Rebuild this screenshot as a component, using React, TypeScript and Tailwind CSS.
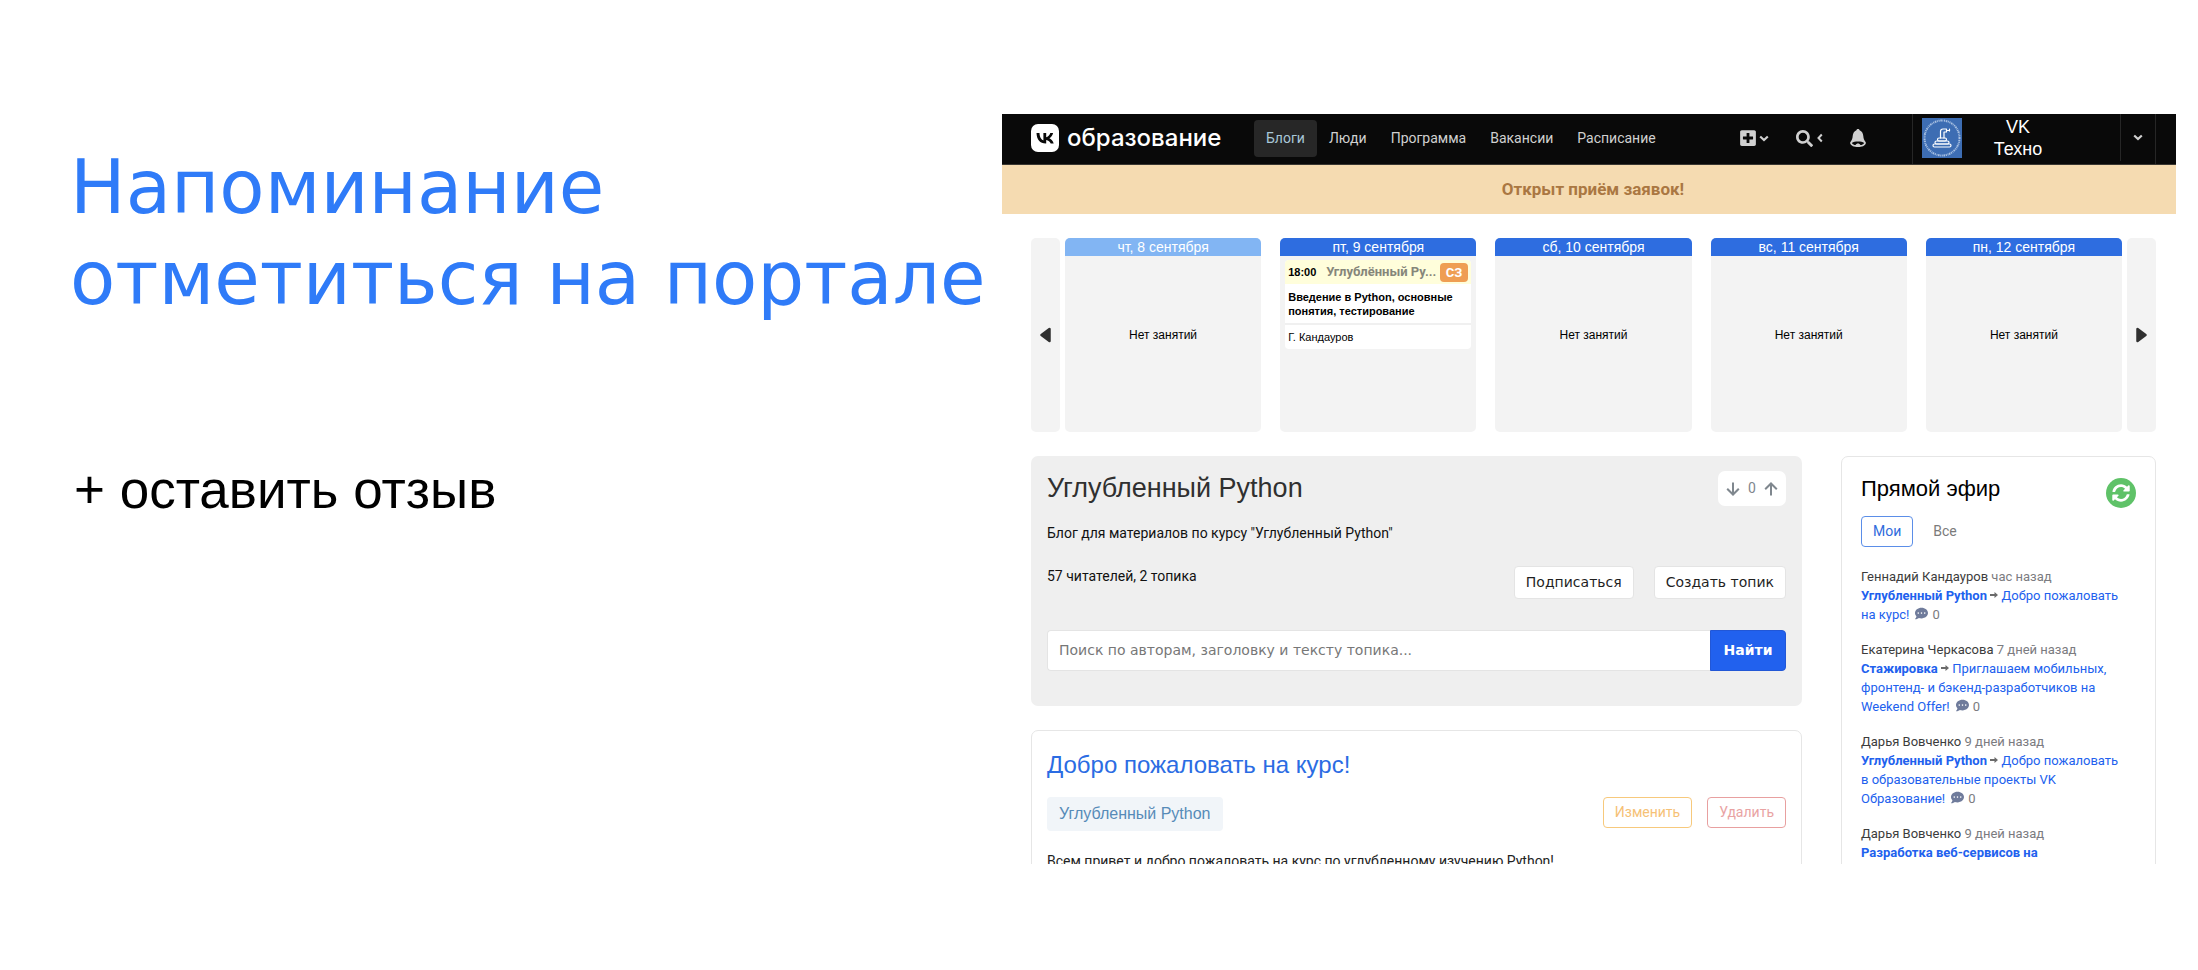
import type { ReactNode } from 'react';
import { FaCommentDots, FaPlusSquare, FaSearch, FaSyncAlt } from 'react-icons/fa';

const helvetica = "font-['Liberation_Sans',Arial,sans-serif]";
const verdana = "font-['DejaVu_Sans',Verdana,sans-serif]";

function VkLogo() {
  return (
    <svg viewBox="0 0 28 28" className="size-7" aria-hidden="true">
      <rect width="28" height="28" rx="7" fill="#fff" />
      <path
        d="M14.8 19.6C9 19.6 5.7 15.7 5.5 9.1h3c.1 4.8 2.2 6.9 3.9 7.3V9.1h2.8v4.2c1.700-.2 3.500-2.100 4.100-4.200h2.800c-.5 2.500-2.300 4.400-3.700 5.200 1.400.6 3.500 2.300 4.300 5.300h-3c-.700-2-2.300-3.500-4.500-3.700v3.700z"
        fill="#090909"
      />
    </svg>
  );
}

function Chevron({ left = false }: { left?: boolean }) {
  return left ? (
    <svg viewBox="0 0 6 10" className="h-[10px] w-[6px]" aria-hidden="true">
      <path d="M4.800 1.500 1.500 5l3.300 3.500" fill="none" stroke="#d0d0d0" strokeWidth="2" />
    </svg>
  ) : (
    <svg viewBox="0 0 10 7" className="h-[7px] w-[10px]" aria-hidden="true">
      <path d="M1.200 1.500 5 5l3.800-3.500" fill="none" stroke="#d0d0d0" strokeWidth="2.200" />
    </svg>
  );
}

function Bell() {
  return (
    <svg viewBox="0 0 16 18" className="h-[18px] w-4" aria-hidden="true">
      <path
        d="M8 0c.8 0 1.400.5 1.600 1.200 2.400 1 3.500 3.200 3.700 5.800.2 2.700.8 4.200 2.100 5.700.5.6.6 1.100.4 1.700C15.100 16.600 11.900 18 8 18S.9 16.600.2 14.400c-.2-.6-.1-1.100.4-1.700C1.900 11.200 2.500 9.700 2.700 7c.2-2.600 1.300-4.800 3.700-5.800C6.600.5 7.200 0 8 0z"
        fill="#d0d0d0"
      />
      <path d="M1.900 13.900c1.300-.9 3.600-1.300 6.100-1.300s4.800.4 6.100 1.300c-.9 1.400-2.200 2-3.700 2.200-.5-1-1.300-1.500-2.400-1.500s-1.900.5-2.400 1.500c-1.500-.2-2.800-.8-3.700-2.200z" fill="#090909" />
    </svg>
  );
}

function Avatar() {
  return (
    <svg viewBox="0 0 40 40" className="size-10 shrink-0" role="img" aria-label="VK Техно">
      <rect width="40" height="40" fill="#3d6db3" />
      <circle cx="20" cy="20" r="17.500" fill="none" stroke="#a9c1e2" strokeWidth="2" strokeDasharray="1.100 .7 1.600 .6 .8 .8" />
      <g fill="none" stroke="#fff" strokeWidth="1.200" strokeLinejoin="round" strokeLinecap="round">
        <rect x="11" y="26" width="18" height="3" rx="1.500" />
        <rect x="13" y="23" width="14" height="3" rx="1.500" />
        <rect x="15.500" y="20" width="9" height="3" rx="1.500" />
        <path d="M18.500 20v-6.500c0-1.600 1-2.500 2.500-2.500h3.500v3H22v6M24.500 12.500h3M27.500 11.200v1.800" />
      </g>
    </svg>
  );
}

function Arrow({ up = false }: { up?: boolean }) {
  return (
    <svg viewBox="0 0 14 14" className="size-[14px]" fill="none" stroke="#7f878e" strokeWidth="2" aria-hidden="true">
      {up ? <path d="M7 13.500V1.500M1.200 7.200 7 1.500l5.800 5.700" /> : <path d="M7 .5v12M1.200 6.800 7 12.500l5.800-5.700" />}
    </svg>
  );
}

function Triangle({ right = false }: { right?: boolean }) {
  return (
    <svg viewBox="0 0 11 16" className="h-4 w-[11px]" aria-hidden="true">
      <path
        d={right ? 'M1.500 2v12L9.500 8z' : 'M9.500 2v12L1.500 8z'}
        fill="#303030"
        stroke="#303030"
        strokeWidth="2.500"
        strokeLinejoin="round"
      />
    </svg>
  );
}

function RightArrow() {
  return (
    <svg viewBox="0 0 8 6" className="inline-block h-[6px] w-2 align-[2px]" aria-hidden="true">
      <path d="M0 2h4.500V0L8 3 4.500 6V4H0z" fill="#6b6b6b" />
    </svg>
  );
}

const links = ['Блоги', 'Люди', 'Программа', 'Вакансии', 'Расписание'];

function NavBar() {
  return (
    <header className="flex h-[51px] items-stretch border-b border-[#3a3732] bg-[#090909] pr-5 pl-[29px]">
      <a href="#home" className="flex w-[223px] items-center gap-2 pb-[2px] font-[Inter,sans-serif] text-2xl font-medium text-white">
        <VkLogo />
        образование
      </a>
      <nav className="flex items-center pb-[2px] text-[14px]">
        {links.map((label, i) => (
          <a
            key={label}
            href="#nav"
            className={
              i === 0
                ? 'flex h-[37px] items-center rounded-[4px] bg-[#272727] px-3 text-[#a9c7d8]'
                : 'flex h-[37px] items-center px-3 text-[#d0d0d0]'
            }
          >
            {label}
          </a>
        ))}
      </nav>
      <div className="ml-auto flex items-center gap-[27px] pr-[46px] pb-[2px] text-[#d0d0d0]">
        <button type="button" aria-label="Создать" className="flex items-center gap-[2px]">
          <FaPlusSquare className="size-[18px]" />
          <Chevron />
        </button>
        <button type="button" aria-label="Поиск" className="flex items-center gap-1">
          <FaSearch className="size-[17px]" />
          <Chevron left />
        </button>
        <button type="button" aria-label="Уведомления">
          <Bell />
        </button>
      </div>
      <div className="flex w-[244px] items-stretch border-r border-l border-[#262626]">
        <div className="flex flex-1 items-center pb-[2px] pl-[9px]">
          <Avatar />
          <a href="#profile" className={`w-28 px-7 text-center text-[18px] leading-[22px] text-white ${helvetica}`}>
            VK Техно
          </a>
        </div>
        <button type="button" aria-label="Меню" className="mb-[3px] flex w-[35px] items-center justify-center border-l border-[#262626]">
          <Chevron />
        </button>
      </div>
    </header>
  );
}

function Day({ title, past = false, children }: { title: string; past?: boolean; children?: ReactNode }) {
  return (
    <section className="flex flex-col overflow-hidden rounded-[5px] bg-[#f3f3f3]">
      <h3 className={`h-[18px] text-center text-[14px] leading-[18px] text-white ${past ? 'bg-[#82b5f3]' : 'bg-[#2e6de0]'}`}>{title}</h3>
      {children ?? <p className="flex flex-1 items-center justify-center pb-[18px] text-xs text-black">Нет занятий</p>}
    </section>
  );
}

function Schedule() {
  return (
    <div className={`mt-6 flex h-[194px] gap-[5px] ${helvetica}`}>
      <button type="button" aria-label="Назад" className="flex w-[29px] items-center justify-center rounded-[5px] bg-[#f3f3f3]">
        <Triangle />
      </button>
      <div className="grid flex-1 grid-cols-5 gap-[19px]">
        <Day title="чт, 8 сентября" past />
        <Day title="пт, 9 сентября">
          <article className="m-[5px] mt-1 overflow-hidden rounded-[4px] bg-white text-[11px] text-black">
            <div className="flex h-6 items-center bg-[#fffedb] px-[3px]">
              <time className="w-7 font-bold">18:00</time>
              <span className="ml-[10px] flex-1 font-[Roboto,sans-serif] text-[13px] font-bold text-[#86867a]">Углублённый Ру...</span>
              <span className="rounded-[4px] bg-[#ef9e53] px-[6px] font-[Roboto,sans-serif] text-[13px] leading-[19px] font-bold text-white">СЗ</span>
            </div>
            <h4 className="px-[3px] pt-[6px] pb-[5px] leading-[14px] font-bold">Введение в Python, основные понятия, тестирование</h4>
            <p className="border-t-2 border-[#f0f0f0] px-[3px] leading-6">Г. Кандауров</p>
          </article>
        </Day>
        <Day title="сб, 10 сентября" />
        <Day title="вс, 11 сентября" />
        <Day title="пн, 12 сентября" />
      </div>
      <button type="button" aria-label="Вперёд" className="flex w-[29px] items-center justify-center rounded-[5px] bg-[#f3f3f3]">
        <Triangle right />
      </button>
    </div>
  );
}

function BlogCard() {
  return (
    <section className="rounded-[7px] bg-[#efefef] px-4 pt-[15px] pb-[35px]">
      <div className="flex items-start justify-between">
        <h2 className={`text-[27px] leading-[35px] text-[#303030] ${helvetica}`}>Углубленный Python</h2>
        <div className="flex h-[35px] w-[68px] items-center justify-center gap-2 rounded-[7px] bg-white text-[14px] text-[#7f878e]">
          <button type="button" aria-label="Минус">
            <Arrow />
          </button>
          <span>0</span>
          <button type="button" aria-label="Плюс">
            <Arrow up />
          </button>
        </div>
      </div>
      <p className="mt-[17px] text-[14px] leading-5">Блог для материалов по курсу "Углубленный Python"</p>
      <div className="mt-[23px] flex items-start">
        <p className="flex-1 text-[14px] leading-5">57 читателей, 2 топика</p>
        <div className={`flex gap-5 text-[14px] text-[#1f1f1f] ${verdana}`}>
          <button type="button" className="h-[33px] rounded-[4px] border border-[#e4e4e4] bg-white px-[11px]">Подписаться</button>
          <button type="button" className="h-[33px] rounded-[4px] border border-[#e4e4e4] bg-white px-[11px]">Создать топик</button>
        </div>
      </div>
      <form className={`mt-[31px] flex h-[41px] text-[14px] ${verdana}`}>
        <input
          type="search"
          aria-label="Поиск"
          placeholder="Поиск по авторам, заголовку и тексту топика..."
          className="min-w-0 flex-1 rounded-l-[4px] border border-r-0 border-[#e4e4e4] bg-white px-[11px] placeholder:text-[#777]"
        />
        <button type="button" className="w-[76px] rounded-r-[4px] border border-[#2257d6] bg-[#2161ee] font-bold text-white">Найти</button>
      </form>
    </section>
  );
}

function TopicCard() {
  return (
    <article className="h-[240px] rounded-[7px] border border-[#e6e6e6] bg-white px-[15px] pt-[18px]">
      <h2 className={`text-2xl leading-8 text-[#2b6ce3] ${helvetica}`}>
        <a href="#topic">Добро пожаловать на курс!</a>
      </h2>
      <div className="mt-4 flex items-start">
        <a href="#blog" className={`rounded-[4px] bg-[#f1f5f9] px-3 text-[16px] leading-[34px] text-[#578bb8] ${helvetica}`}>Углубленный Python</a>
        <div className="ml-auto flex gap-[15px] text-[14px]">
          <button type="button" className="h-[31px] rounded-[4px] border border-[#f7c97c] px-[11px] text-[#f6c176]">Изменить</button>
          <button type="button" className="h-[31px] rounded-[4px] border border-[#e8a0a0] px-[11px] text-[#e9a3a3]">Удалить</button>
        </div>
      </div>
      <p className="mt-5 text-[14px] leading-5 text-[#222]">Всем привет и добро пожаловать на курс по углубленному изучению Python!</p>
    </article>
  );
}

const feed: { author: string; time: string; blog: string; lines: string[] }[] = [
  { author: 'Геннадий Кандауров', time: 'час назад', blog: 'Углубленный Python', lines: ['Добро пожаловать', 'на курс!'] },
  {
    author: 'Екатерина Черкасова',
    time: '7 дней назад',
    blog: 'Стажировка',
    lines: ['Приглашаем мобильных,', 'фронтенд- и бэкенд-разработчиков на', 'Weekend Offer!'],
  },
  {
    author: 'Дарья Вовченко',
    time: '9 дней назад',
    blog: 'Углубленный Python',
    lines: ['Добро пожаловать', 'в образовательные проекты VK', 'Образование!'],
  },
  { author: 'Дарья Вовченко', time: '9 дней назад', blog: 'Разработка веб-сервисов на', lines: [] },
];

function LiveFeed() {
  return (
    <aside className="h-[520px] w-[315px] rounded-[7px] border border-[#e6e6e6] bg-white px-[19px] pt-[17px]">
      <div className="flex h-[42px] items-start justify-between">
        <h2 className={`text-[22px] leading-[30px] text-black ${helvetica}`}>Прямой эфир</h2>
        <button type="button" aria-label="Обновить" className="mt-1 flex size-[30px] items-center justify-center rounded-full bg-[#5fc268] text-white">
          <FaSyncAlt className="size-[18px]" />
        </button>
      </div>
      <div className="flex gap-2 text-[14px]">
        <button type="button" className="h-[31px] rounded-[4px] border border-[#5b8ee8] px-[11px] text-[#2f6bdc]">Мои</button>
        <button type="button" className="h-[31px] px-3 text-[#7b7b7b]">Все</button>
      </div>
      <ul className="mt-5 space-y-4 text-[13px] leading-[19px] text-[#7b7b80]">
        {feed.map((item, n) => (
          <li key={n}>
            <a href="#author" className="text-[#3c3c3c]">{item.author}</a> {item.time}
            <br />
            <a href="#blog" className="font-bold text-[#2161ee]">{item.blog}</a>
            {item.lines.length > 0 && (
              <>
                {' '}
                <RightArrow />{' '}
                <a href="#topic" className="text-[#2161ee]">
                  {item.lines.map((line, i) => (
                    <span key={line}>
                      {i > 0 && <br />}
                      {line}
                    </span>
                  ))}
                </a>
                <FaCommentDots className="mr-1 ml-[6px] inline size-[13px] align-[-1px] text-[#6f7b9b]" />0
              </>
            )}
          </li>
        ))}
      </ul>
    </aside>
  );
}

export default function App() {
  return (
    <main className="grid min-h-screen grid-cols-[1002fr_1174fr] items-start bg-white pr-[22px]">
      <section className="pt-[142px] pl-[70px]">
        <h1 className={`text-[74px] leading-[91px] whitespace-nowrap text-[#2f7bf8] ${verdana}`}>
          Напоминание
          <br />
          отметиться на портале
        </h1>
        <p className={`mt-[134px] pl-1 text-[53px] leading-[64px] text-black ${helvetica}`}>+ оставить отзыв</p>
      </section>
      <section className="mt-[114px] h-[750px] overflow-hidden bg-white font-[Roboto,sans-serif] text-[#111]">
        <NavBar />
        <p className="bg-[#f5dbb1] pl-2 text-center text-[17px] leading-[49px] font-bold text-[#aa7742]">Открыт приём заявок!</p>
        <div className="pr-5 pl-[29px]">
          <Schedule />
          <div className="mt-6 flex items-start gap-[39px]">
            <div className="flex flex-1 flex-col gap-6">
              <BlogCard />
              <TopicCard />
            </div>
            <LiveFeed />
          </div>
        </div>
      </section>
    </main>
  );
}
